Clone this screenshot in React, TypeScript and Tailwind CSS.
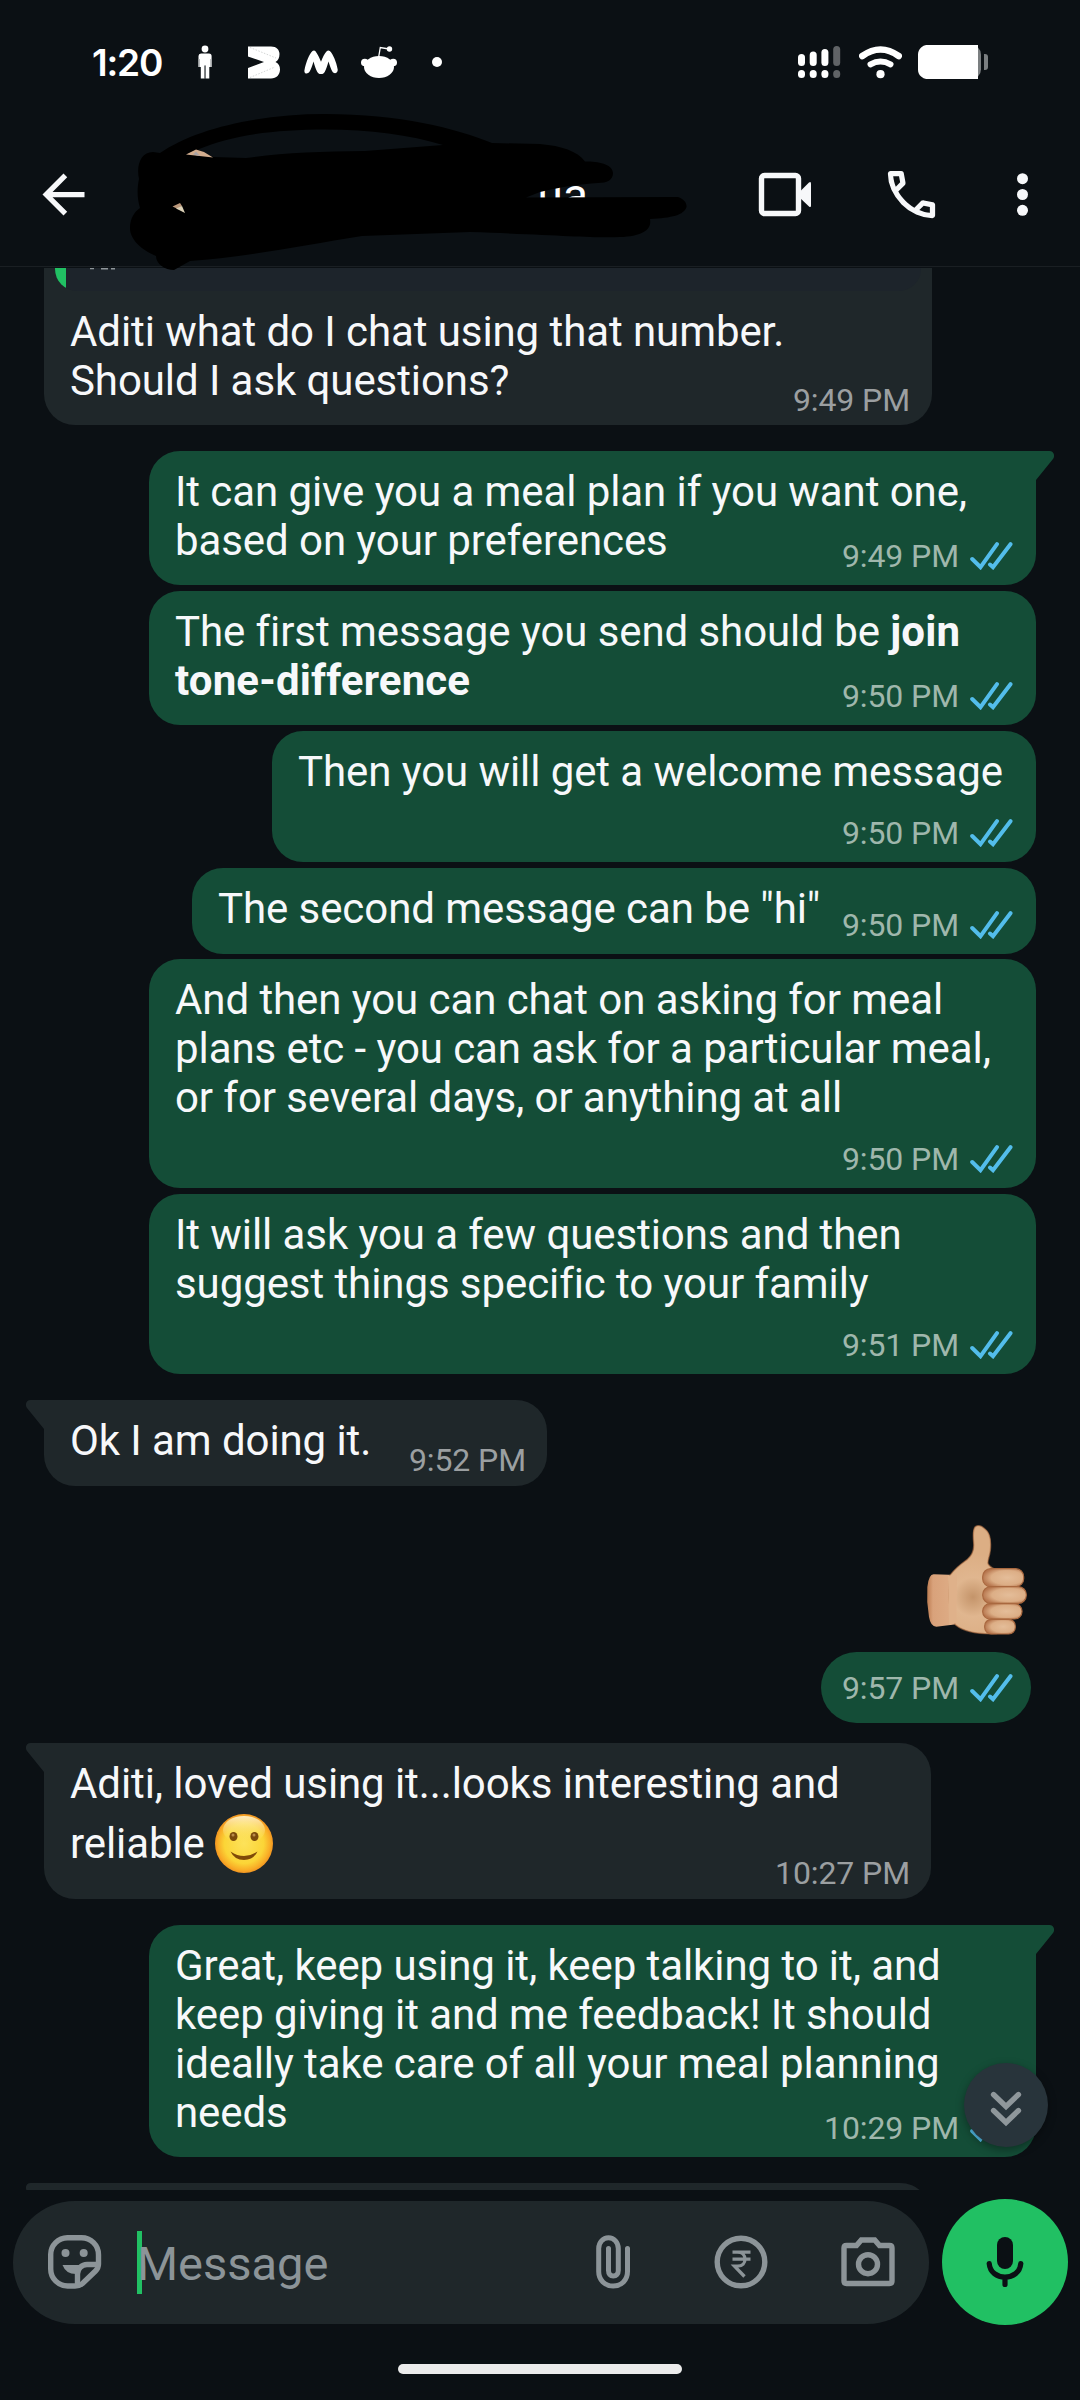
import type { ReactNode } from 'react'
import clsx from 'clsx'

function StatusBar() {
  return (
    <div className="flex h-[124px] items-center pl-[92px] pr-[92px] text-white">
      <span className="w-[74px] font-['Inter'] text-[37px] font-semibold leading-none tracking-[-1.2px]">1:20</span>

      <svg className="ml-[32px]" width="14" height="34" viewBox="0 0 14 34" fill="currentColor">
        <circle cx="7" cy="4" r="3.4" />
        <path d="M3 8.5h8a2.6 2.6 0 0 1 2.6 2.6V22h-2.3v11.4H7.8V21H6.4v12.4H2.8V22H.5V11.1A2.6 2.6 0 0 1 3 8.5Z" />
        <path d="M6.4 20h1.3v13.4H6.4z" fill="#8c9092" />
        <path d="M.5 14h1.300v8H.5zM12.300 14h1.300v8h-1.300z" fill="#aaadaf" />
      </svg>

      <svg className="ml-[36px]" width="32" height="33" viewBox="0 0 32 33" fill="currentColor">
        <path d="M0 .5h23c5.500 0 8.500 3.500 8.500 7.500 0 4-1.500 6.500-4 8 3 1.500 4.500 4 4.500 7.500 0 5-3.500 9-9 9H0v-10.500l16-6L0 10.500Z" />
        <path d="M2 1.500 28 12M2 31.500 27 21" stroke="#c9cbcc" strokeWidth=".8" strokeDasharray="1.500 1.500" />
      </svg>

      <svg className="ml-[24px]" width="34" height="24" viewBox="0 0 34 24">
        <path
          d="M.4 20.500C2 12 5.500 3.500 8.500 1c1-.9 2.200-.8 3 .3 2.300 3 4 7 5.500 10.500C18.500 7.500 20.500 3.500 22.700 1.200c1-1 2.100-1 3.100-.1 3.200 3 6.600 11 7.900 18.500.4 3.500-3.300 5-5.200 2.200-1.500-2.500-2.700-6-4-10.300-1.200 4-2.300 7.500-3.800 10.500-1.700 3-5.700 3-7.400 0-1.500-3-2.700-6.500-3.800-10.500-1.200 4.300-2.500 7.800-4 10.300C3.600 24.500.1 24 .4 20.500Z"
          fill="currentColor"
        />
      </svg>

      <svg className="ml-[23px]" width="36" height="32" viewBox="0 0 36 32" fill="currentColor">
        <path d="M17.500 12 19.300 1.500 28 3" fill="none" stroke="currentColor" strokeWidth="1.300" />
        <circle cx="28.500" cy="3" r="2.700" />
        <circle cx="3.800" cy="16.500" r="3.800" />
        <circle cx="32.200" cy="16.500" r="3.800" />
        <ellipse cx="18" cy="21" rx="15" ry="11" />
      </svg>

      <span className="ml-[35px] size-[10px] rounded-full bg-white" />

      <svg className="ml-auto" width="43" height="33" viewBox="0 0 43 33" fill="currentColor">
        <rect x="0" y="8" width="7" height="12" rx="3.500" />
        <rect x="11.700" y="5.500" width="7" height="14.500" rx="3.500" />
        <rect x="23.400" y="3" width="7" height="17" rx="3.500" />
        <rect x="35.200" y="0" width="7" height="20" rx="3.500" opacity=".35" />
        <rect x="0" y="24" width="7" height="8" rx="3.500" />
        <rect x="11.700" y="24" width="7" height="8" rx="3.500" />
        <rect x="23.400" y="24" width="7" height="8" rx="3.500" />
        <rect x="35.200" y="24" width="7" height="8" rx="3.500" opacity=".35" />
      </svg>

      <svg className="ml-[18px]" width="43" height="33" viewBox="0 0 43 33" fill="none" stroke="currentColor" strokeLinecap="round">
        <path d="M3.300 10Q21.500-3 39.700 10" strokeWidth="6.500" />
        <path d="M11.500 18.300q10-5.500 20 0" strokeWidth="6" />
        <circle cx="21.500" cy="28.200" r="4.100" fill="currentColor" stroke="none" />
      </svg>

      <svg className="ml-[16px]" width="70" height="34" viewBox="0 0 70 34">
        <rect x="1" width="62" height="34" rx="9.500" fill="#7b7f81" />
        <path d="M10.500 0H60v34H10.500A9.500 9.500 0 0 1 0 24.500v-15A9.500 9.500 0 0 1 10.500 0Z" fill="#fff" />
        <path d="M66 9h1a3 3 0 0 1 3 3v10a3 3 0 0 1-3 3h-1z" fill="#7b7f81" />
      </svg>
    </div>
  )
}

// black marker strokes that hide the avatar and most of the name
function Redaction() {
  return (
    <svg className="pointer-events-none absolute left-0 top-0 z-10" width="720" height="280" viewBox="0 0 720 280">
      <path
        fillRule="evenodd"
        d="M160 153C196 128 260 114 325 114C400 114 455 128 492 143L540 144C562 146 577 151 585 161.500C600 161 613 165 613 173C613 180 607 183 598 183C580 184 560 187 540 192L526 197.500L678 197C684 199 687 203 686.500 207C684 215 672 218 650 219C652 230 642 236 620 237C590 238 560 235 470 232L362 236C300 246 240 258 190 261L174 270C165 270 156 264 156 256C142 250 130 240 130 228C130 219 134 212 140 208C137 198 137 189 139 179C136 165 141 152 153 152ZM198 149.500L213 157L246 158C280 153 320 151.500 365 151L443 145C410 135 370 129.500 325 129.500C275 129.500 232 135 198 149.500Z"
      />
      <path d="M186 154.500 196 149.500 204 152 213 157.500Z" fill="#d3ae8f" />
      <path d="M193 154.500 196 151.500l4 4.500z" fill="#a9a4a5" />
      <path d="M172.500 206.500 180 203 182 206 178 209Z" fill="#bb977a" />
      <path d="M176 208.500 182 206 185 213Z" fill="#dcd2b8" />
    </svg>
  )
}

function ChatHeader() {
  return (
    <div className="flex h-[143px] items-center border-b border-[#1a1f23] pb-px pl-[32px]">
      <svg width="63" height="63" viewBox="0 0 24 24" fill="#f7f8fa">
        <path d="M20 11H7.830l5.590-5.590L12 4l-8 8 8 8 1.410-1.410L7.830 13H20v-2z" />
      </svg>
      <span className="ml-auto text-[46px] leading-none text-white">ua</span>
      <svg className="ml-[170px]" width="54" height="63" viewBox="0 0 54 63">
        <rect x="3.500" y="12.500" width="37" height="38" rx="3" fill="none" stroke="#f7f8fa" strokeWidth="5.400" />
        <path d="M41 29.500 51 19.500q2-1.500 2 1v22q0 2.500-2 1L41 34Z" fill="#f7f8fa" />
      </svg>
      <svg className="ml-[68px]" width="63" height="63" viewBox="0 0 24 24" fill="#f7f8fa">
        <path d="M19.950 21q-3.125 0-6.175-1.362t-5.550-3.863-3.862-5.550T3 4.050q0-.45.300-.75t.75-.300H8.100q.350 0 .625.238t.325.562l.650 3.500q.050.400-.025.675T9.400 8.450L6.975 10.900q.500.925 1.187 1.787t1.513 1.663q.775.775 1.625 1.438T13.100 17l2.350-2.350q.225-.225.588-.337t.712-.063l3.450.700q.350.100.575.363T21 15.900v4.050q0 .450-.300.750t-.750.300M6.025 9l1.650-1.650L7.250 5H5.025q.125 1.025.350 2.025T6.025 9m8.950 8.950q.975.425 1.988.675T19 18.950v-2.200l-2.350-.475z" />
      </svg>
      <svg className="ml-[74px] mr-[52px]" width="11" height="63" viewBox="0 0 11 63" fill="#f7f8fa">
        <circle cx="5.500" cy="15.700" r="5.500" />
        <circle cx="5.500" cy="31.500" r="5.500" />
        <circle cx="5.500" cy="47.300" r="5.500" />
      </svg>
    </div>
  )
}

function Ticks() {
  return (
    <svg width="43" height="28" viewBox="0 0 43 28" fill="none" stroke="#53bdeb" strokeWidth="4" strokeLinecap="round">
      <path d="M2.200 17 10.500 25.200 27 2.200" />
      <path d="M20 22.500 23 25.200 40.500 2.200" />
    </svg>
  )
}

type MetaProps = { time: string; sent?: boolean }

function Meta({ time, sent }: MetaProps) {
  return (
    <div
      className={clsx(
        'flex items-center gap-[11px] text-[32px] leading-[38px] tracking-[-0.1px]',
        sent ? 'text-[#9fb7ac]' : 'text-[#9b9fa1]',
      )}
    >
      <span className="whitespace-nowrap">{time}</span>
      {sent && <Ticks />}
    </div>
  )
}

type BubbleProps = {
  time: string
  sent?: boolean
  tail?: boolean
  className: string
  children: ReactNode
}

function Bubble({ time, sent, tail, className, children }: BubbleProps) {
  return (
    <div
      className={clsx(
        'relative grid shrink-0 rounded-[31px] pl-[26px] pt-[16px]',
        sent ? 'self-end bg-[#144d37]' : 'self-start bg-[#1f272a]',
        tail && (sent ? 'rounded-tr-none' : 'rounded-tl-none'),
        className,
      )}
    >
      <p className="whitespace-nowrap text-[42px] leading-[49px] tracking-[-0.08px] text-[#f7f8fa] [grid-area:1/1]">{children}</p>
      <div className={clsx('self-end justify-self-end [grid-area:1/1]', sent ? 'pb-[10px] pr-[23px]' : 'pb-[7px] pr-[21px]')}>
        <Meta time={time} sent={sent} />
      </div>
      {tail && (
        <svg
          className={clsx('absolute top-0', sent ? '-right-[18px]' : '-left-[18px] -scale-x-100')}
          width="19"
          height="30"
          viewBox="0 0 19 30"
          fill={sent ? '#144d37' : '#1f272a'}
        >
          <path d="M0 0H14.500C18.500 0 20.500 4.500 18 8L1 29V30H0Z" />
        </svg>
      )}
    </div>
  )
}

function ThumbsUp() {
  return (
    <svg role="img" aria-label="thumbs up" className="mr-[53px] mt-[33px] shrink-0 self-end" width="101" height="110" viewBox="439 74 303 330">
      <defs>
        <linearGradient id="wrist" x1="440" x2="540" y1="0" y2="0" gradientUnits="userSpaceOnUse">
          <stop offset="0" stopColor="#b9784c" />
          <stop offset=".2" stopColor="#d9a27b" />
          <stop offset="1" stopColor="#dfb089" />
        </linearGradient>
        <radialGradient id="palm" cx="580" cy="290" r="130" gradientUnits="userSpaceOnUse">
          <stop offset="0" stopColor="#c4946a" />
          <stop offset=".45" stopColor="#e0b68f" />
          <stop offset="1" stopColor="#dcae84" />
        </radialGradient>
        <radialGradient id="finger" cx=".6" cy=".5" r=".6">
          <stop offset="0" stopColor="#e4bd99" />
          <stop offset=".65" stopColor="#dcae86" />
          <stop offset="1" stopColor="#b87850" />
        </radialGradient>
      </defs>
      <path d="M462 222Q447 222 443 260Q440 305 448 350Q453 379 470 379L530 372V224Z" fill="url(#wrist)" />
      <path
        d="M510 226C530 200 548 188 562 178C578 165 584 150 582 128C580 106 579 90 586 80C594 73 606 76 616 86C632 98 635 120 632 150C630 168 623 180 625 190Q630 200 645 206L650 400C600 402 555 396 528 374C512 355 502 280 510 226Z"
        fill="url(#palm)"
        stroke="#b06f45"
        strokeWidth="4"
        strokeOpacity=".6"
      />
      <path d="M505 227 532 222 530 368 508 374Z" fill="#dfb18a" />
      <g fill="url(#finger)" stroke="#a9683f" strokeWidth="3.500">
        <rect x="609" y="205" width="123" height="54" rx="24" />
        <rect x="609" y="259" width="131" height="50" rx="24" />
        <rect x="609" y="310" width="118" height="46" rx="22" />
        <rect x="615" y="357" width="92" height="44" rx="20" />
      </g>
    </svg>
  )
}

function Smile() {
  return (
    <svg role="img" aria-label="smiling face" className="-mt-[6px] inline-block align-middle" width="58" height="59" viewBox="0 0 58 59">
      <defs>
        <radialGradient id="face" cx=".5" cy=".5" r=".52">
          <stop offset="0" stopColor="#fde25a" />
          <stop offset=".65" stopColor="#fbd537" />
          <stop offset=".86" stopColor="#f9ae27" />
          <stop offset="1" stopColor="#ef8c1f" />
        </radialGradient>
        <linearGradient id="shine" x1="0" x2="0" y1="0" y2="1">
          <stop offset="0" stopColor="#fff3d0" stopOpacity=".9" />
          <stop offset="1" stopColor="#fde25a" stopOpacity="0" />
        </linearGradient>
      </defs>
      <ellipse cx="29" cy="29.500" rx="29" ry="29.500" fill="url(#face)" />
      <ellipse cx="29" cy="16" rx="21" ry="14" fill="url(#shine)" />
      <ellipse cx="18.500" cy="22.500" rx="4" ry="4.500" fill="#7a4a0c" />
      <ellipse cx="39.500" cy="22.500" rx="4" ry="4.500" fill="#7a4a0c" />
      <circle cx="18" cy="21" r="1.500" fill="#b98a4a" />
      <circle cx="39" cy="21" r="1.500" fill="#b98a4a" />
      <path d="M15.500 37.500Q29 46.500 42.500 37.500Q38.500 46 29 46T15.500 37.500Z" fill="#7f4a08" />
    </svg>
  )
}

function Messages() {
  return (
    <main className="relative flex h-[1922px] flex-col gap-[6px] overflow-hidden pl-[44px]">
      <div className="grid h-[157px] w-[888px] shrink-0 rounded-b-[31px] bg-[#1f272a]">
        <div className="mx-[11px] flex h-[23px] overflow-hidden rounded-b-[22px] bg-[#1d242b] [grid-area:1/1]">
          <span className="w-[11px] bg-[#21c063]" />
          <svg className="ml-[24px]" width="26" height="3" viewBox="0 0 26 3" fill="#8f969a">
            <path d="M0 0h4v1.200H0zM11 0h7v1.500h-7zM21 0h4v1.500h-4z" />
          </svg>
        </div>
        <p className="mt-[39px] whitespace-nowrap pl-[26px] text-[42px] leading-[49px] tracking-[-0.08px] text-[#f7f8fa] [grid-area:1/1]">
          Aditi what do I chat using that number.
          <br />
          Should I ask questions?
        </p>
        <div className="self-end justify-self-end pb-[6px] pr-[22px] [grid-area:1/1]">
          <Meta time="9:49 PM" />
        </div>
      </div>

      <Bubble sent tail time="9:49 PM" className="mr-[44px] mt-[20px] h-[134px] w-[887px]">
        It can give you a meal plan if you want one,
        <br />
        based on your preferences
      </Bubble>
      <Bubble sent time="9:50 PM" className="mr-[44px] h-[134px] w-[887px]">
        The first message you send should be <b className="tracking-[0.15px]">join</b>
        <br />
        <b className="tracking-[0.15px]">tone-difference</b>
      </Bubble>
      <Bubble sent time="9:50 PM" className="mr-[44px] h-[131px] w-[764px]">
        Then you will get a welcome message
      </Bubble>
      <Bubble sent time="9:50 PM" className="mr-[44px] h-[86px] w-[844px]">
        The second message can be "hi"
      </Bubble>
      <Bubble sent time="9:50 PM" className="-mt-px mr-[44px] h-[229px] w-[887px]">
        And then you can chat on asking for meal
        <br />
        plans etc - you can ask for a particular meal,
        <br />
        or for several days, or anything at all
      </Bubble>
      <Bubble sent time="9:51 PM" className="mr-[44px] h-[180px] w-[887px]">
        It will ask you a few questions and then
        <br />
        suggest things specific to your family
      </Bubble>

      <Bubble tail time="9:52 PM" className="mt-[20px] h-[86px] w-[503px]">
        Ok I am doing it.
      </Bubble>

      <ThumbsUp />
      <div className="mr-[49px] mt-[11px] flex h-[71px] w-[210px] shrink-0 items-center justify-end self-end rounded-full bg-[#144d37] pr-[18px]">
        <Meta sent time="9:57 PM" />
      </div>

      <Bubble tail time="10:27 PM" className="mt-[14px] h-[156px] w-[887px]">
        Aditi, loved using it...looks interesting and
        <span className="block leading-[72px]">
          reliable <Smile />
        </span>
      </Bubble>

      <Bubble sent tail time="10:29 PM" className="mr-[44px] mt-[20px] h-[232px] w-[887px]">
        Great, keep using it, keep talking to it, and
        <br />
        keep giving it and me feedback! It should
        <br />
        ideally take care of all your meal planning
        <br />
        needs
      </Bubble>

      <Bubble tail time="" className="mt-[20px] h-[90px] w-[887px]">
        {null}
      </Bubble>

      <button
        type="button"
        aria-label="Scroll to bottom"
        className="absolute bottom-[43px] right-[32px] flex size-[84px] items-center justify-center rounded-full bg-[#28343b] shadow-[0_3px_8px_rgba(0,0,0,0.35)]"
      >
        <svg className="mt-[8px]" width="32" height="36" viewBox="0 0 32 36" fill="none" stroke="#8f979b" strokeWidth="5.300" strokeLinecap="round" strokeLinejoin="miter">
          <path d="M3.500 3.500 16 15.500 28.500 3.500" />
          <path d="M3.500 19.500 16 31.500 28.500 19.500" />
        </svg>
      </button>
    </main>
  )
}

function Composer() {
  return (
    <footer className="flex h-[144px] items-center pl-[13px]">
      <div className="flex h-[123px] w-[916px] items-center rounded-full bg-[#1f272a] pl-[35px] pr-[34px] text-[#8c9498]">
        <svg width="54" height="54" viewBox="0 0 54 54" fill="none" stroke="currentColor" strokeWidth="5.400">
          <path d="M20 2.700H33.500A17 17 0 0 1 50.500 19.700V29Q50.500 33 47.500 36L34.500 48.500Q31.500 51 27 51H20A17 17 0 0 1 2.700 34V20A17 17 0 0 1 20 2.700Z" />
          <path d="M29.500 50V39A9.500 9.500 0 0 1 39 29.500H50" />
          <circle cx="17.500" cy="18" r="4" fill="currentColor" stroke="none" />
          <circle cx="35.700" cy="18" r="4" fill="currentColor" stroke="none" />
          <path d="M14.500 30H34Q29.500 33 29 39Q18 39.500 14.500 30Z" fill="currentColor" stroke="none" />
        </svg>
        <span className="ml-[35px] h-[63px] w-[5px] shrink-0 bg-[#21c063]" />
        <span className="-ml-[5px] mt-[2px] text-[47px] leading-[55px]">Message</span>

        <svg className="ml-auto" width="35" height="54" viewBox="0 0 35 54" fill="none" stroke="currentColor" strokeWidth="5" strokeLinecap="round">
          <path d="M31.500 13.500V36.500C31.500 45 25.500 51 17.200 51S2.700 45 2.700 36.500V13.500C2.700 7.500 7 2.800 12.500 2.800S22.300 7.500 22.300 13.500V35.500C22.300 39 20.300 41 17.300 41S12.500 39 12.500 35.500V13.500" />
        </svg>
        <svg className="ml-[83px]" width="54" height="54" viewBox="0 0 54 54" fill="none" stroke="currentColor">
          <circle cx="27" cy="27" r="23.800" strokeWidth="5.400" />
          <path d="M18.500 17.200H36.500M18.500 24.200H36.500M19 17.200H23.500C33.500 17.200 33.500 31.200 23.500 31.200H20.500L30.500 41.500" strokeWidth="3.300" />
        </svg>
        <svg className="ml-[73px]" width="54" height="50" viewBox="0 0 54 50" fill="none" stroke="currentColor" strokeWidth="5.400">
          <path d="M5.500 8.500H15.500L20.300 3H33.700L38.500 8.500H48.500Q51 8.500 51 11V44Q51 46.500 48.500 46.500H5.500Q3 46.500 3 44V11Q3 8.500 5.500 8.500Z" />
          <circle cx="27" cy="27.200" r="9.500" />
        </svg>
      </div>

      <button
        type="button"
        aria-label="Voice message"
        className="ml-[13px] flex size-[126px] items-center justify-center rounded-full bg-[#21c063]"
      >
        <svg width="38" height="52" viewBox="0 0 38 52" fill="none" stroke="#0b1014" strokeWidth="5.200" strokeLinecap="round">
          <rect x="11" y="1" width="16" height="32" rx="8" fill="#0b1014" stroke="none" />
          <path d="M3.200 27.500C4 36.500 11 41 19 41S34 36.500 34.800 27.500M19 42V48.500" />
        </svg>
      </button>
    </footer>
  )
}

function App() {
  return (
    <div className="relative flex h-[2400px] w-[1080px] flex-col overflow-hidden bg-[#0b1014] font-['Roboto',sans-serif]">
      <header className="h-[268px] shrink-0">
        <StatusBar />
        <ChatHeader />
      </header>
      <Redaction />
      <Messages />
      <Composer />
      <div className="mt-[30px] h-[10px] w-[284px] self-center rounded-full bg-[#ebebeb]" />
    </div>
  )
}

export default App
